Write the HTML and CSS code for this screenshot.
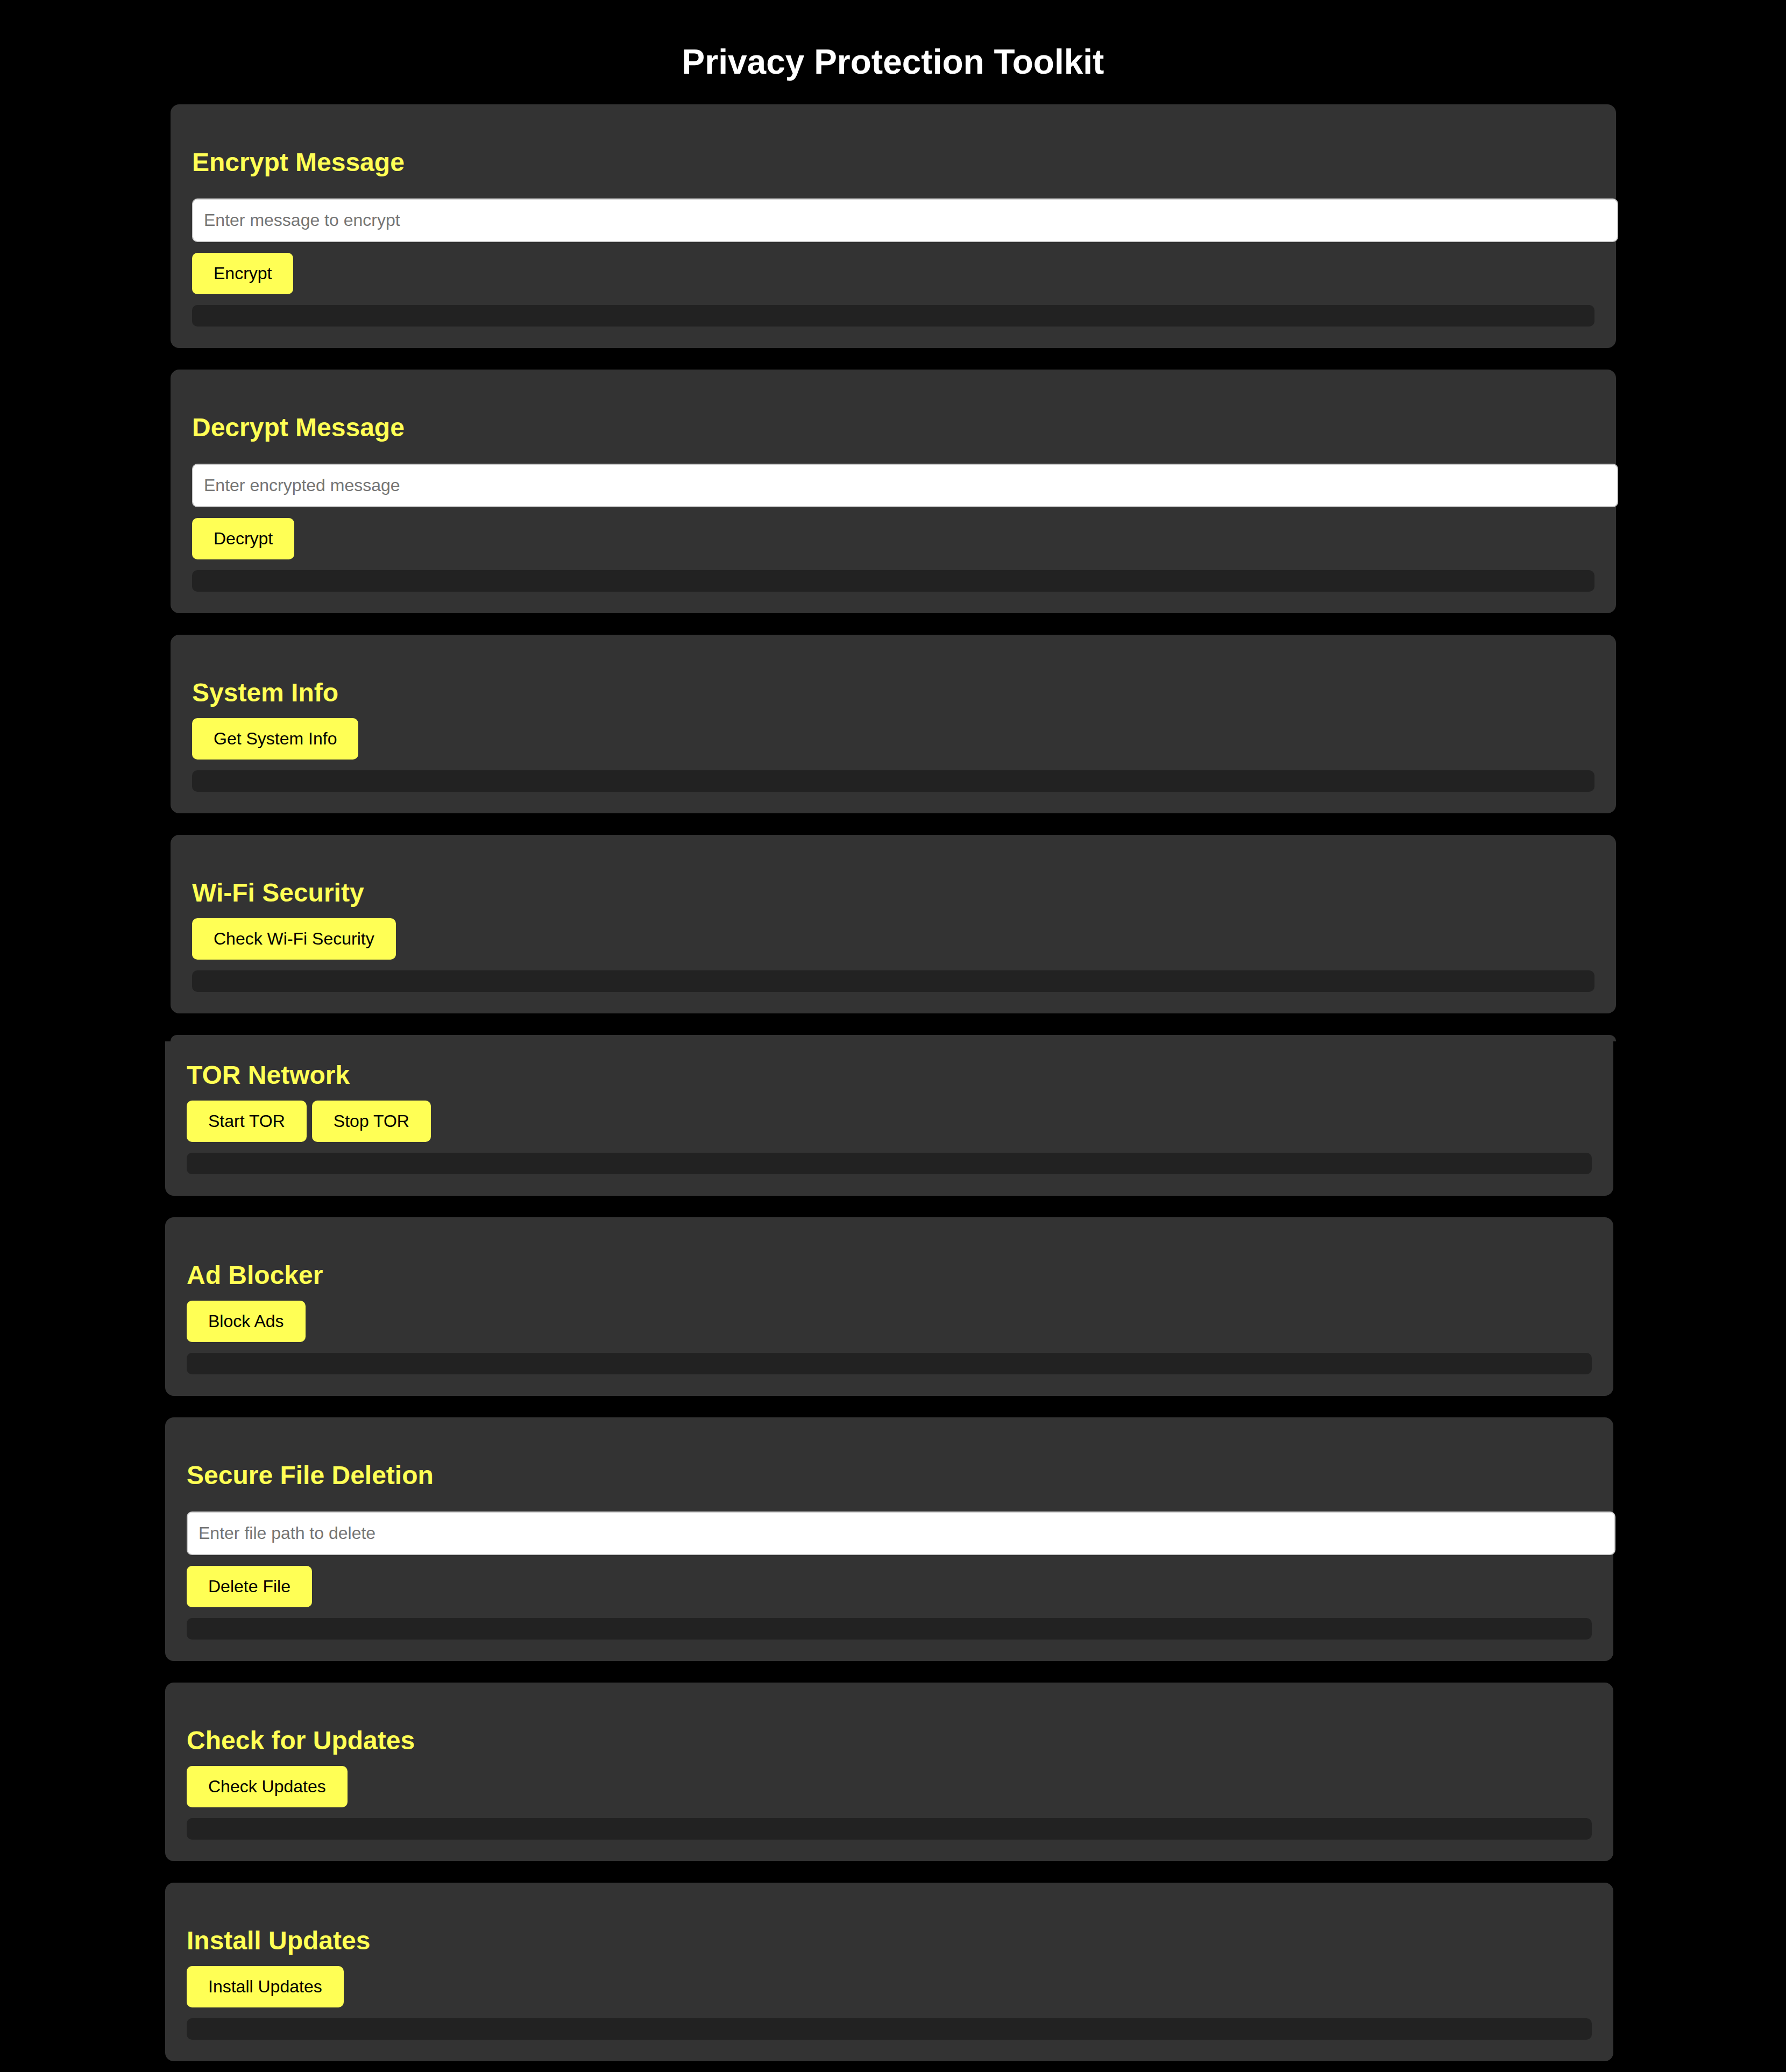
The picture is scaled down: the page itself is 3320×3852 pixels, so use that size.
FILE: index.html
```html
<!DOCTYPE html>
<html lang="en">
<head>
<meta charset="utf-8">
<title>Privacy Protection Toolkit</title>
<link rel="stylesheet" href="styles.css">
</head>
<body>
<h1 class="title">Privacy Protection Toolkit</h1>

<div class="group group-a">
  <section class="card">
    <h2 class="card-title">Encrypt Message</h2>
    <input class="field" type="text" placeholder="Enter message to encrypt">
    <div class="actions"><button class="btn">Encrypt</button></div>
    <div class="output"></div>
  </section>

  <section class="card">
    <h2 class="card-title">Decrypt Message</h2>
    <input class="field" type="text" placeholder="Enter encrypted message">
    <div class="actions"><button class="btn">Decrypt</button></div>
    <div class="output"></div>
  </section>

  <section class="card">
    <h2 class="card-title">System Info</h2>
    <div class="actions"><button class="btn">Get System Info</button></div>
    <div class="output"></div>
  </section>

  <section class="card">
    <h2 class="card-title">Wi-Fi Security</h2>
    <div class="actions"><button class="btn">Check Wi-Fi Security</button></div>
    <div class="output"></div>
  </section>

  <div class="card-stub"></div>
</div>

<div class="group group-b">
  <section class="card card-tor">
    <h2 class="card-title">TOR Network</h2>
    <div class="actions"><button class="btn">Start TOR</button><button class="btn">Stop TOR</button></div>
    <div class="output"></div>
  </section>

  <section class="card">
    <h2 class="card-title">Ad Blocker</h2>
    <div class="actions"><button class="btn">Block Ads</button></div>
    <div class="output"></div>
  </section>

  <section class="card">
    <h2 class="card-title">Secure File Deletion</h2>
    <input class="field" type="text" placeholder="Enter file path to delete">
    <div class="actions"><button class="btn">Delete File</button></div>
    <div class="output"></div>
  </section>

  <section class="card">
    <h2 class="card-title">Check for Updates</h2>
    <div class="actions"><button class="btn">Check Updates</button></div>
    <div class="output"></div>
  </section>

  <section class="card">
    <h2 class="card-title">Install Updates</h2>
    <div class="actions"><button class="btn">Install Updates</button></div>
    <div class="output"></div>
  </section>
</div>
</body>
</html>
```

FILE: styles.css
```css
html, body {
  margin: 0;
  padding: 0;
  background: #000;
}

body {
  font-family: "Liberation Sans", Arial, Helvetica, sans-serif;
  font-size: 32px;
  color: #fff;
}

.title {
  margin: 0;
  padding: 78px 0 42px;
  font-size: 64px;
  line-height: 74px;
  font-weight: bold;
  text-align: center;
  color: #fff;
}

.group {
  display: flex;
  flex-direction: column;
}

.group-a {
  width: 2687px;
  margin-left: 317px;
}

.group-b {
  width: 2692px;
  margin-left: 307px;
}

.card {
  display: flex;
  flex-direction: column;
  align-items: flex-start;
  background: #333;
  border-radius: 16px;
  padding: 40px;
  margin: 0 0 40px;
}

.card-stub {
  height: 12px;
  background: #333;
  border-radius: 16px 16px 0 0;
}

.card-tor {
  padding-top: 35px;
  border-radius: 0 0 16px 16px;
}

.card-title {
  margin: 40px 0 20px;
  font-size: 48px;
  line-height: 55px;
  font-weight: bold;
  color: #ffff55;
}

.card-tor .card-title {
  margin-top: 0;
}

.field {
  box-sizing: content-box;
  width: 100%;
  height: 37px;
  margin: 20px 0 20px;
  padding: 20px;
  border: 2px solid #ccc;
  border-radius: 10px;
  background: #fff;
  font-family: "Liberation Sans", Arial, Helvetica, sans-serif;
  font-size: 32px;
  line-height: 37px;
  color: #000;
  outline: none;
}

.field::placeholder {
  color: #757575;
}

.actions {
  display: flex;
  gap: 10px;
}

.btn {
  padding: 20px 40px;
  border: none;
  border-radius: 10px;
  background: #ffff55;
  color: #000;
  font-family: "Liberation Sans", Arial, Helvetica, sans-serif;
  font-size: 32px;
  line-height: 37px;
  cursor: pointer;
}

.output {
  align-self: stretch;
  margin-top: 20px;
  padding: 20px;
  background: #222;
  border-radius: 10px;
}
```
